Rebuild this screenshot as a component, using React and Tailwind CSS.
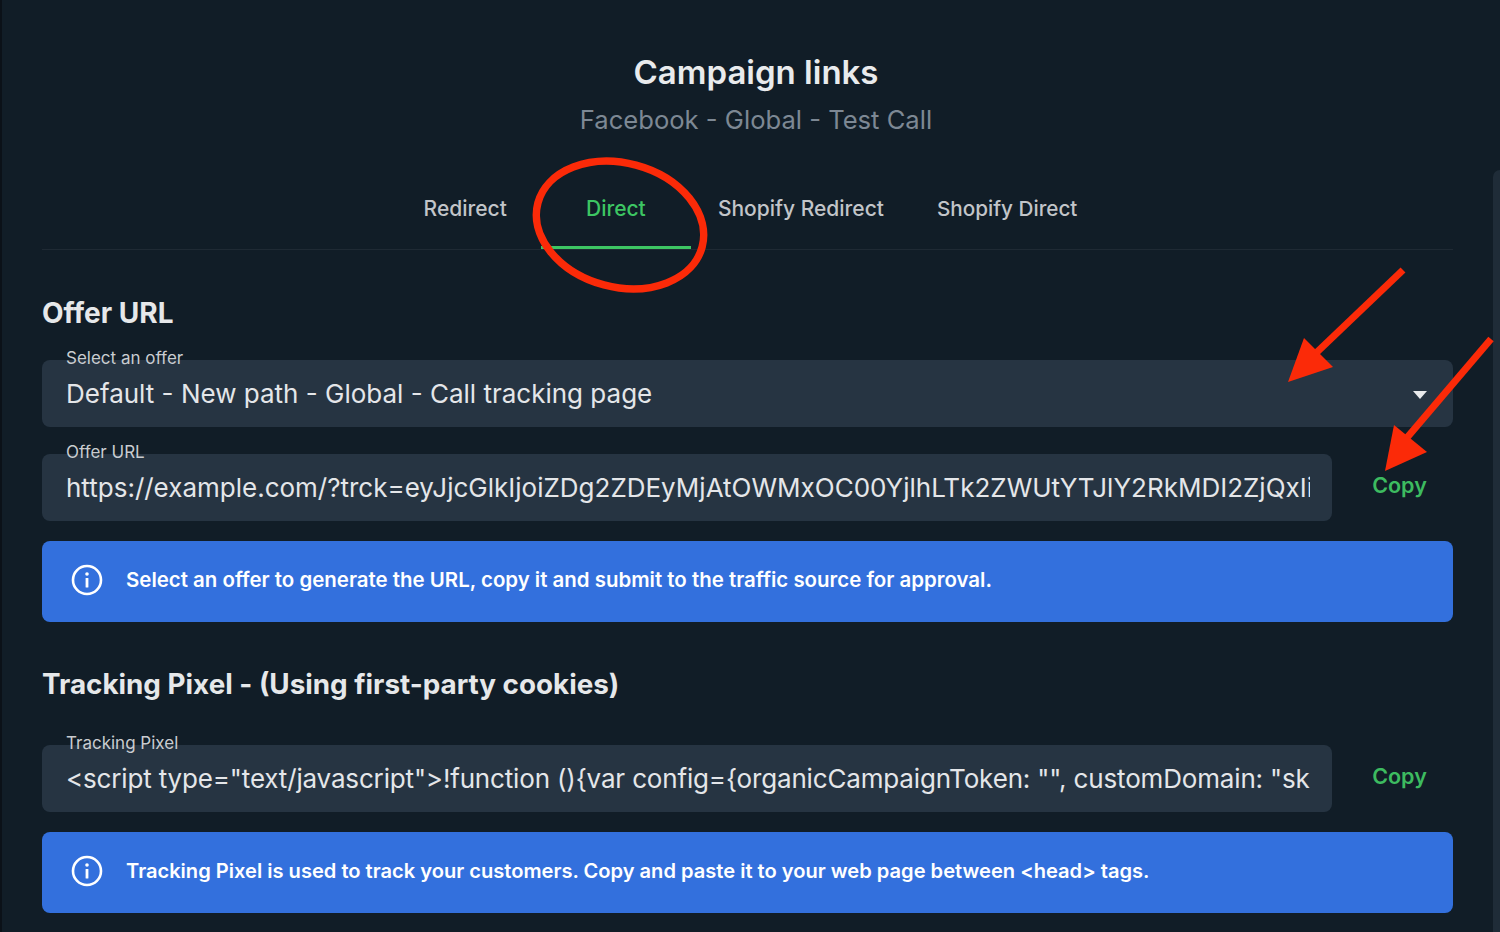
import React from "react";

function Info() {
  return (
    <svg width="32" height="32" viewBox="0 0 32 32" fill="none" className="shrink-0">
      <circle cx="16" cy="16" r="14" stroke="white" strokeWidth="2.6" />
      <rect x="14.6" y="14" width="2.8" height="9.5" rx="0.6" fill="white" />
      <circle cx="16" cy="10" r="1.8" fill="white" />
    </svg>
  );
}

function Field({ label, value, caret, tight }) {
  return (
    <div className="relative h-[67px] flex-1 min-w-0 rounded-lg bg-[#263442] pl-6 pr-[22px] flex items-center">
      <span className="absolute left-6 top-[-14px] text-[17px] leading-[24px] text-[#c9ccd0] whitespace-nowrap">{label}</span>
      <span className={tight ? "flex-1 min-w-0 overflow-hidden whitespace-nowrap text-[26px] leading-[34px] tracking-[-0.16px] text-[#e4e6e9]" : "flex-1 min-w-0 overflow-hidden whitespace-nowrap text-[26px] leading-[34px] text-[#e4e6e9]"}>{value}</span>
      {caret && (
        <svg width="14" height="8" viewBox="0 0 14 8" className="shrink-0 mr-[4px] mt-[2px]">
          <path d="M0 0H14L7 8Z" fill="#e8eaec" />
        </svg>
      )}
    </div>
  );
}

function Alert({ children, size }) {
  return (
    <div className={"h-[81px] rounded-lg bg-[#3370dd] flex items-center pl-[29px] gap-[23px] text-white font-semibold pb-[3px] " + size}>
      <Info />
      <span>{children}</span>
    </div>
  );
}

function Copy() {
  return <div className="w-[121px] shrink-0 pl-[14px] pb-[4px] text-center text-[21.5px] font-semibold text-[#3dbb60]">Copy</div>;
}

export default function App() {
  return (
    <div className="relative h-[932px] w-[1500px] overflow-hidden bg-[#111d27] font-['Inter',sans-serif]">
      <div className="absolute left-0 top-0 h-full w-[2px] bg-[#0b1118]" />
      <div className="absolute right-0 top-[170px] bottom-0 w-[7px] rounded-tl-lg bg-[#1f2c38]" />

      <div className="pl-[42px] pr-[47px] pt-[50px]">
        <div className="pl-[17px] text-center">
          <h1 className="text-[33px] leading-[44px] font-semibold text-[#e9ebed]">Campaign links</h1>
          <p className="mt-[8px] text-[25.6px] leading-[36px] text-[#7d8894]">Facebook - Global - Test Call</p>
        </div>

        <div className="mt-[36px] h-[76px] border-b border-[#1f2a34] flex justify-center pl-[6px] text-[21px] font-medium text-[#c2c5c9]">
          <div className="flex items-center px-[27px] pb-[6px]">Redirect</div>
          <div className="ml-[7px] relative flex w-[150px] items-center justify-center pb-[6px] text-[#3dc663]">
            Direct
            <span className="absolute left-0 right-0 bottom-0 h-[3px] bg-[#3dc663]" />
          </div>
          <div className="flex items-center px-[27px] pb-[6px]">Shopify Redirect</div>
          <div className="flex items-center ml-[-1px] px-[27px] pb-[6px] text-[20.7px]">Shopify Direct</div>
        </div>

        <h2 className="mt-[44px] text-[28px] leading-[38px] font-bold text-[#e6e8ea]">Offer URL</h2>

        <div className="mt-[28px]">
          <Field label="Select an offer" value="Default - New path - Global - Call tracking page" caret />
        </div>

        <div className="mt-[27px] flex items-center">
          <Field label="Offer URL" value="https://example.com/?trck=eyJjcGlkIjoiZDg2ZDEyMjAtOWMxOC00YjlhLTk2ZWUtYTJlY2RkMDI2ZjQxIiwicGF0aCI6" />
          <Copy />
        </div>

        <div className="mt-[20px]">
          <Alert size="text-[20.45px]">Select an offer to generate the URL, copy it and submit to the traffic source for approval.</Alert>
        </div>

        <h2 className="mt-[43px] text-[27.8px] leading-[38px] font-bold text-[#e6e8ea]">Tracking Pixel - (Using first-party cookies)</h2>

        <div className="mt-[42px] flex items-center">
          <Field tight label="Tracking Pixel" value={'<script type="text/javascript">!function (){var config={organicCampaignToken: "", customDomain: "sk'} />
          <Copy />
        </div>

        <div className="mt-[20px]">
          <Alert size="text-[20.1px]">Tracking Pixel is used to track your customers. Copy and paste it to your web page between &lt;head&gt; tags.</Alert>
        </div>
      </div>

      <svg className="absolute left-0 top-0 pointer-events-none" width="1500" height="932" viewBox="0 0 1500 932" fill="none">
        <ellipse cx="620" cy="225" rx="85" ry="62" transform="rotate(15 620 225)" stroke="#fb2a08" strokeWidth="7.5" />
        <path d="M1403 270L1315 354" stroke="#fb2a08" strokeWidth="7" />
        <path d="M1288 382L1304 338L1333 367Z" fill="#fb2a08" />
        <path d="M1491 339L1405 440" stroke="#fb2a08" strokeWidth="7" />
        <path d="M1385 471L1394 425L1427 452Z" fill="#fb2a08" />
      </svg>
    </div>
  );
}
